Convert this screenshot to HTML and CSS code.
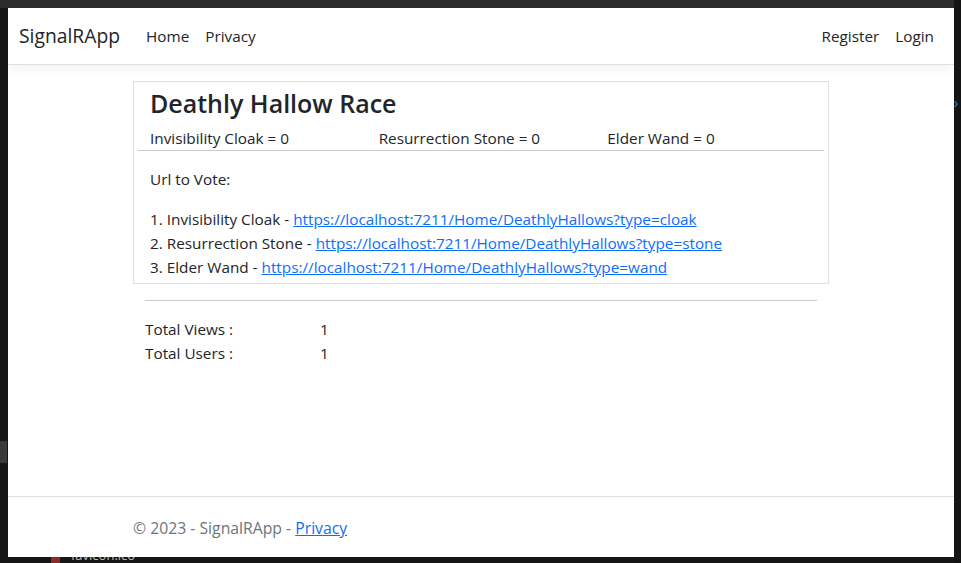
FILE: index.html
```html
<!DOCTYPE html>
<html lang="en">
<head>
<meta charset="utf-8">
<title>SignalRApp</title>
<link rel="stylesheet" href="styles.css">
</head>
<body>
<div class="screen">
  <div class="topband"></div>
  <div class="side-left"><div class="thumb"></div></div>
  <div class="window">
    <header class="navbar">
      <a class="brand" href="#">SignalRApp</a>
      <nav class="nav">
        <a href="#">Home</a>
        <a href="#">Privacy</a>
      </nav>
      <nav class="nav nav-right">
        <a href="#">Register</a>
        <a href="#">Login</a>
      </nav>
    </header>
    <main class="container">
      <section class="card">
        <h4 class="title">Deathly Hallow Race</h4>
        <div class="counts">
          <div class="col">Invisibility Cloak = 0</div>
          <div class="col">Resurrection Stone = 0</div>
          <div class="col">Elder Wand = 0</div>
        </div>
        <div class="vote">
          <p class="vote-label">Url to Vote:</p>
          <div class="vote-list">
            <div>1. Invisibility Cloak - <a href="#">https://localhost:7211/Home/DeathlyHallows?type=cloak</a></div>
            <div>2. Resurrection Stone - <a href="#">https://localhost:7211/Home/DeathlyHallows?type=stone</a></div>
            <div>3. Elder Wand - <a href="#">https://localhost:7211/Home/DeathlyHallows?type=wand</a></div>
          </div>
        </div>
      </section>
      <div class="stats">
        <hr class="rule">
        <div class="stat-grid">
          <span>Total Views :</span><span>1</span>
          <span>Total Users :</span><span>1</span>
        </div>
      </div>
    </main>
    <footer class="footer">
      <div class="container">&copy; 2023 - SignalRApp - <a href="#">Privacy</a></div>
    </footer>
  </div>
  <div class="side-right"><span class="chev">&rsaquo;</span></div>
  <div class="bottomband">
    <span class="fav-icon"></span><span class="fav-text">favicon.ico</span>
  </div>
</div>
</body>
</html>
```

FILE: styles.css
```css
html, body {
  margin: 0;
  padding: 0;
}
body {
  background: #161616;
  width: 961px;
  height: 563px;
  overflow: hidden;
  font-family: "Open Sans", "Noto Sans", sans-serif;
  font-size: 15.3px;
  line-height: 24px;
  color: #212529;
}
.screen {
  display: grid;
  grid-template-columns: 8px 946px 7px;
  grid-template-rows: 8px 549px 6px;
  width: 961px;
  height: 563px;
}
.topband {
  grid-column: 1 / 3;
  grid-row: 1;
  background: #2c2c2c;
}
.side-left {
  grid-column: 1;
  grid-row: 2 / 4;
  background: #161616;
  position: relative;
}
.thumb {
  position: absolute;
  left: 0;
  top: 433px;
  width: 7px;
  height: 22px;
  background: #3a3a3a;
}
.side-right {
  grid-column: 3;
  grid-row: 1 / 4;
  background: #141414;
  position: relative;
}
.chev {
  position: absolute;
  left: 0;
  top: 96px;
  color: #3b82c4;
  font-size: 14px;
  line-height: 14px;
}
.bottomband {
  grid-column: 2;
  grid-row: 3;
  background: #161616;
  overflow: hidden;
  position: relative;
}
.fav-icon {
  position: absolute;
  left: 43px;
  top: 0;
  width: 9px;
  height: 6px;
  background: #8a2a2a;
}
.fav-text {
  position: absolute;
  left: 63px;
  top: -9px;
  font-size: 13px;
  line-height: 14px;
  color: #bdbdbd;
}
.window {
  grid-column: 2;
  grid-row: 2;
  background: #fff;
  display: flex;
  flex-direction: column;
  overflow: hidden;
}
.navbar {
  height: 57px;
  box-sizing: border-box;
  border-bottom: 1px solid #dee2e6;
  box-shadow: 0 4px 12px rgba(0, 0, 0, 0.05);
  display: flex;
  align-items: center;
  padding: 0 12px 0 11px;
  flex-shrink: 0;
}
.brand {
  font-size: 19.3px;
  line-height: 30px;
  color: #212529;
  text-decoration: none;
  margin-right: 18px;
}
.nav {
  display: flex;
}
.nav a {
  padding: 8px;
  color: #212529;
  text-decoration: none;
}
.nav-right {
  margin-left: auto;
}
.container {
  width: 696px;
  margin: 0 auto;
}
main.container {
  margin-top: 16px;
}
.card {
  border: 1px solid #dedede;
  padding: 7px 4px 4px;
}
.title {
  margin: 0 0 8px;
  padding-left: 12px;
  font-size: 25px;
  line-height: 29px;
  font-weight: 600;
}
.counts {
  display: grid;
  grid-template-columns: repeat(3, 1fr);
  border-bottom: 1px solid #c8c8c8;
}
.counts .col {
  padding: 0 12px;
}
.vote {
  padding: 16px 12px 0;
}
.vote-label {
  margin: 0 0 16px;
}
a {
  color: #0d6efd;
}
.stats {
  padding: 0 12px;
}
.rule {
  border: 0;
  border-top: 1px solid #c9cacb;
  margin: 16px 0 16px;
}
.stat-grid {
  display: grid;
  grid-template-columns: 175px 1fr;
}
.footer {
  margin-top: auto;
  border-top: 1px solid #dee2e6;
  line-height: 58px;
  color: #6c757d;
  font-size: 15.75px;
  flex-shrink: 0;
}
.footer .container {
  padding-top: 2px;
}
.footer a {
  color: #0d6efd;
}
```
